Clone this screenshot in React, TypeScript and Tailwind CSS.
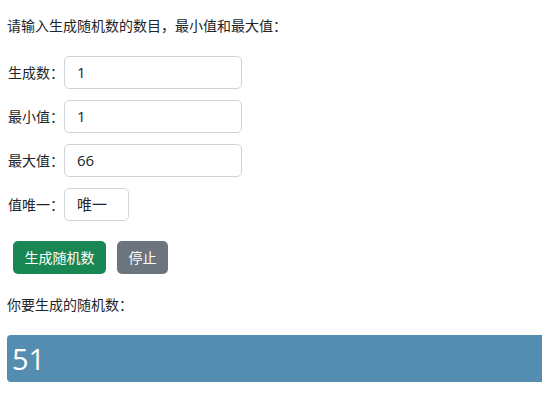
import React from "react";

const font = { fontFamily: '"Open Sans", "Noto Sans CJK SC", sans-serif' };

type Field = { label: string; value: string; wide: boolean };

const fields: Field[] = [
  { label: "生成数：", value: "1", wide: true },
  { label: "最小值：", value: "1", wide: true },
  { label: "最大值：", value: "66", wide: true },
  { label: "值唯一：", value: "唯一", wide: false },
];

export default function App() {
  return (
    <div
      className="w-[542px] h-[397px] overflow-hidden bg-white text-[#212529] pl-[7px] pt-[17px]"
      style={font}
    >
      <p className="text-[14px] leading-[18px]">请输入生成随机数的数目，最小值和最大值：</p>

      <div className="mt-[21px] flex flex-col gap-[11px]">
        {fields.map((f) => (
          <div key={f.label} className="flex items-center">
            <span className="w-[57px] text-[14px] pl-px">{f.label}</span>
            <div
              className={`h-[33px] ${f.wide ? "w-[178px]" : "w-[65px]"} border border-[#ced4da] rounded-[5px] flex items-center px-[12px] text-[15px]`}
            >
              {f.value}
            </div>
          </div>
        ))}
      </div>

      <div className="mt-[20px] ml-[6px] flex gap-[11px]">
        <button className="h-[33px] px-[11.5px] rounded-[5px] bg-[#198754] text-white text-[14px]">
          生成随机数
        </button>
        <button className="h-[33px] px-[11.5px] rounded-[5px] bg-[#6c757d] text-white text-[14px]">
          停止
        </button>
      </div>

      <p className="mt-[22px] text-[14px] leading-[18px]">你要生成的随机数：</p>

      <div className="mt-[21px] h-[47px] bg-[#558db0] rounded-l-[4px] flex items-center pl-[5px] text-white text-[29px]">
        51
      </div>
    </div>
  );
}
